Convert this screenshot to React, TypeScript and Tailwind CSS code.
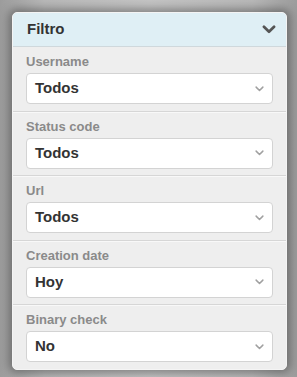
import React from "react";

const Chevron = ({ className }: { className?: string }) => (
  <svg viewBox="0 0 12 8" className={className} fill="none" stroke="currentColor" strokeWidth="2" strokeLinecap="round" strokeLinejoin="round">
    <path d="M1.5 1.5 L6 6 L10.5 1.5" />
  </svg>
);

const fields = [
  { label: "Username", value: "Todos" },
  { label: "Status code", value: "Todos" },
  { label: "Url", value: "Todos" },
  { label: "Creation date", value: "Hoy" },
  { label: "Binary check", value: "No" },
];

export default function App() {
  return (
    <div
      className="w-[297px] h-[377px] overflow-hidden pt-[12px] pl-[12px]"
      style={{ fontFamily: '"Liberation Sans", Arial, sans-serif', background: "linear-gradient(90deg, #9c9c9c 0%, #b8b8b8 15%, #c4c4c4 50%, #b8b8b8 85%, #9c9c9c 100%)" }}
    >
      <div className="w-[275px] rounded-[5px] border border-[#f4f4f4] bg-[#eeeeee] shadow-[0_0_10px_3px_rgba(0,0,0,0.35)] overflow-hidden">
        <div className="h-[34px] bg-[#dfeff5] border-b border-[#cfd8dc] flex items-center justify-between pl-[14px] pr-[10px]">
          <span className="text-[15px] font-bold text-[#333]">Filtro</span>
          <Chevron className="w-[14px] h-[9px] text-[#555] stroke-[2.4]" />
        </div>
        {fields.map((f, i) => (
          <div key={f.label} className={`px-[13px] pt-[7px] pb-[6.5px] ${i > 0 ? "border-t border-[#d6d6d6] shadow-[inset_0_1px_0_#f8f8f8]" : ""}`}>
            <div className="text-[13px] font-bold text-[#8a8a8a] leading-[16px] h-[17px] mb-[2px]">{f.label}</div>
            <div className="h-[31px] bg-white border border-[#d3d3d3] rounded-[4px] flex items-center justify-between pl-[8px] pr-[8px]">
              <span className="text-[15px] font-bold text-[#333]">{f.value}</span>
              <Chevron className="w-[9px] h-[6px] text-[#a0a0a0]" />
            </div>
          </div>
        ))}
      </div>
    </div>
  );
}
